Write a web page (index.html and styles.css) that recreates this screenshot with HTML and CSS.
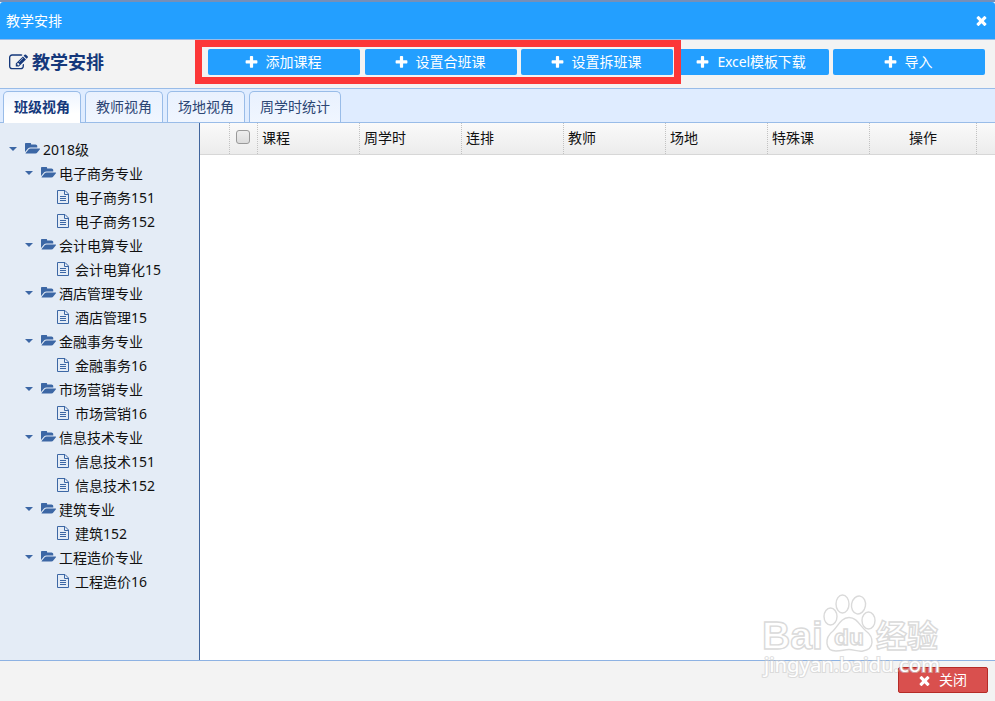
FILE: index.html
```
<!DOCTYPE html>
<html lang="zh-CN">
<head>
<meta charset="utf-8">
<title>教学安排</title>
<link rel="stylesheet" href="styles.css">
</head>
<body>
<svg class="symbols" aria-hidden="true">
  <symbol id="plus" viewBox="0 0 1792 1792"><path d="M1600 736v192q0 40-28 68t-68 28h-416v416q0 40-28 68t-68 28h-192q-40 0-68-28t-28-68v-416h-416q-40 0-68-28t-28-68v-192q0-40 28-68t68-28h416v-416q0-40 28-68t68-28h192q40 0 68 28t28 68v416h416q40 0 68 28t28 68z"/></symbol>
  <symbol id="times" viewBox="0 0 1792 1792"><path d="M1490 1322q0 40-28 68l-136 136q-28 28-68 28t-68-28l-294-294-294 294q-28 28-68 28t-68-28l-136-136q-28-28-28-68t28-68l294-294-294-294q-28-28-28-68t28-68l136-136q28-28 68-28t68 28l294 294 294-294q28-28 68-28t68 28l136 136q28 28 28 68t-28 68l-294 294 294 294q28 28 28 68z"/></symbol>
  <symbol id="edit" viewBox="0 0 1792 1792"><path d="M888 1184l116-116-152-152-116 116v56h96v96h56zm440-720q-16-16-33 1l-350 350q-17 17-1 33t33-1l350-350q17-17 1-33zm80 594v190q0 119-84.500 203.500t-203.500 84.500h-832q-119 0-203.500-84.500t-84.500-203.500v-832q0-119 84.500-203.500t203.500-84.500h832q63 0 117 25 15 7 18 23 3 17-9 29l-49 49q-14 14-32 8-23-6-45-6h-832q-66 0-113 47t-47 113v832q0 66 47 113t113 47h832q66 0 113-47t47-113v-126q0-13 9-22l64-64q15-15 35-7t20 29zm-96-738l288 288-672 672h-288v-288zm444 132l-92 92-288-288 92-92q28-28 68-28t68 28l152 152q28 28 28 68t-28 68z"/></symbol>
  <symbol id="folder" viewBox="0 256 1880 1280"><path d="M1879 952q0 31-31 66l-336 396q-43 51-120.500 86.500t-143.500 35.500h-1088q-34 0-60.500-13t-26.500-43q0-31 31-66l336-396q43-51 120.500-86.500t143.500-35.500h1088q34 0 60.500 13t26.500 43zm-343-344v160h-832q-94 0-197 47.500t-164 119.500l-337 396-5 6q0-4-.5-12.500t-.5-12.500v-960q0-92 66-158t158-66h320q92 0 158 66t66 158v32h544q92 0 158 66t66 158z"/></symbol>
  <symbol id="file" viewBox="0 0 12 14"><path d="M.5.5h7.500l3.500 3.500v9.500h-11zM7.500.5v4h4M3 6.500h6M3 8.500h6M3 10.500h6" fill="none" stroke="currentColor"/></symbol>
</svg>

<div class="dialog">
  <header class="titlebar">
    <span>教学安排</span>
    <svg class="icon"><use href="#times"/></svg>
  </header>

  <div class="toolbar">
    <h1><svg class="edit"><use href="#edit"/></svg>教学安排</h1>
    <div class="actions">
      <div class="highlight"></div>
      <button class="btn first"><svg class="icon"><use href="#plus"/></svg>添加课程</button>
      <button class="btn"><svg class="icon"><use href="#plus"/></svg>设置合班课</button>
      <button class="btn"><svg class="icon"><use href="#plus"/></svg>设置拆班课</button>
      <button class="btn wide"><svg class="icon"><use href="#plus"/></svg><span class="label">Excel模板下载</span></button>
      <button class="btn"><svg class="icon"><use href="#plus"/></svg>导入</button>
    </div>
  </div>

  <nav class="tabs">
    <a class="tab active">班级视角</a>
    <a class="tab">教师视角</a>
    <a class="tab">场地视角</a>
    <a class="tab">周学时统计</a>
  </nav>

  <main class="content">
    <aside class="tree">
      <div class="node root"><i class="arrow"></i><svg class="folder"><use href="#folder"/></svg>2018级</div>
      <div class="node major"><i class="arrow"></i><svg class="folder"><use href="#folder"/></svg>电子商务专业</div>
      <div class="node class"><svg class="file"><use href="#file"/></svg>电子商务151</div>
      <div class="node class"><svg class="file"><use href="#file"/></svg>电子商务152</div>
      <div class="node major"><i class="arrow"></i><svg class="folder"><use href="#folder"/></svg>会计电算专业</div>
      <div class="node class"><svg class="file"><use href="#file"/></svg>会计电算化15</div>
      <div class="node major"><i class="arrow"></i><svg class="folder"><use href="#folder"/></svg>酒店管理专业</div>
      <div class="node class"><svg class="file"><use href="#file"/></svg>酒店管理15</div>
      <div class="node major"><i class="arrow"></i><svg class="folder"><use href="#folder"/></svg>金融事务专业</div>
      <div class="node class"><svg class="file"><use href="#file"/></svg>金融事务16</div>
      <div class="node major"><i class="arrow"></i><svg class="folder"><use href="#folder"/></svg>市场营销专业</div>
      <div class="node class"><svg class="file"><use href="#file"/></svg>市场营销16</div>
      <div class="node major"><i class="arrow"></i><svg class="folder"><use href="#folder"/></svg>信息技术专业</div>
      <div class="node class"><svg class="file"><use href="#file"/></svg>信息技术151</div>
      <div class="node class"><svg class="file"><use href="#file"/></svg>信息技术152</div>
      <div class="node major"><i class="arrow"></i><svg class="folder"><use href="#folder"/></svg>建筑专业</div>
      <div class="node class"><svg class="file"><use href="#file"/></svg>建筑152</div>
      <div class="node major"><i class="arrow"></i><svg class="folder"><use href="#folder"/></svg>工程造价专业</div>
      <div class="node class"><svg class="file"><use href="#file"/></svg>工程造价16</div>
    </aside>
    <section class="grid">
      <div class="grid-head">
        <span></span>
        <span class="check"><i class="box"></i></span>
        <span>课程</span>
        <span>周学时</span>
        <span>连排</span>
        <span>教师</span>
        <span>场地</span>
        <span>特殊课</span>
        <span class="center">操作</span>
      </div>
    </section>
  </main>

  <footer class="footer">
    <button class="close"><svg class="icon"><use href="#times"/></svg>关闭</button>
  </footer>

  <svg class="watermark" viewBox="0 0 190 94">
    <g class="outline">
      <text x="6" y="61" class="latin" textLength="61" lengthAdjust="spacingAndGlyphs">Bai</text>
      <ellipse cx="74.500" cy="28.500" rx="6.500" ry="8.500"/>
      <ellipse cx="86.500" cy="16" rx="6.500" ry="9"/>
      <ellipse cx="102.500" cy="17" rx="7" ry="9" transform="rotate(10 102.500 17)"/>
      <ellipse cx="112.500" cy="32.500" rx="6.500" ry="8.500"/>
      <path d="M93 29.500C85 29.500 82 38 77 43C68 50 69 63 80 63C86 63 88 61.500 93 61.500S102 64 107 63C119 61 118 49 110 43C104 38 101 29.500 93 29.500Z"/>
      <text x="78" y="57" class="du" textLength="30" lengthAdjust="spacingAndGlyphs">du</text>
      <text x="120" y="59" class="cn" textLength="62" lengthAdjust="spacingAndGlyphs">经验</text>
    </g>
    <text x="8" y="84" class="url" textLength="176" lengthAdjust="spacingAndGlyphs">jingyan.baidu.com</text>
  </svg>
</div>
</body>
</html>
```
FILE: styles.css
```
* { box-sizing: border-box; }
body {
  margin: 0;
  font: 14px/20px "Noto Sans", "Noto Sans CJK SC", sans-serif;
  color: #111;
}
button { font: inherit; margin: 0; padding: 0; }
.symbols { position: absolute; width: 0; height: 0; }
.icon { width: 15px; height: 15px; fill: currentColor; flex: none; }

.dialog {
  position: relative;
  display: flex;
  flex-direction: column;
  width: 995px;
  height: 701px;
  overflow: hidden;
  border-top: 2px solid #768fb8;
  background: #fff;
}
.titlebar {
  display: flex;
  align-items: center;
  justify-content: space-between;
  height: 38px;
  flex: none;
  padding: 0 6px;
  color: #fff;
  background: #239fff;
  border-bottom: 1px solid #99bce8;
  border-radius: 3px 3px 0 0;
}

.toolbar {
  display: flex;
  justify-content: space-between;
  height: 49px;
  flex: none;
  padding: 9px 10px 0 9px;
  background: #f3f3f3;
  border-bottom: 1px solid #99bce8;
}
h1 {
  display: flex;
  align-items: center;
  gap: 4px;
  height: 26px;
  margin: 0;
  font-size: 18px;
  font-weight: 700;
  color: #15387b;
}
.edit { width: 19px; height: 19px; fill: currentColor; }
.actions { position: relative; display: flex; gap: 4px; }
.highlight {
  position: absolute;
  left: -13px;
  top: -9px;
  width: 486px;
  height: 44px;
  border: 7px solid #fc3738;
  z-index: 1;
}
.btn {
  display: flex;
  align-items: center;
  justify-content: center;
  gap: 7px;
  width: 152px;
  height: 26px;
  padding-right: 3px;
  border: 0;
  border-radius: 2px;
  color: #fff;
  background: #239fff;
}
.first { margin-right: 1px; }
.wide { padding-right: 5px; }
.label { letter-spacing: -.1px; }

.tabs {
  display: flex;
  align-items: flex-end;
  gap: 4px;
  height: 34px;
  flex: none;
  padding-left: 3px;
  background: #dfecff;
  border-bottom: 1px solid #99bce8;
}
.tab {
  height: 31px;
  padding: 5px 10px 0;
  border: 1px solid #99bce8;
  border-bottom: 0;
  border-radius: 5px 5px 0 0;
  color: #2c4674;
  background: linear-gradient(#e9f1fe, #f0f6ff);
}
.tab.active {
  height: 32px;
  margin-bottom: -1px;
  font-weight: 700;
  color: #15387b;
  background: linear-gradient(#edf4ff, #fff 70%);
}

.content { display: flex; flex: 1; min-height: 0; }
.tree {
  width: 200px;
  padding-top: 15px;
  background: #e4ecf6;
  border-right: 1px solid #40659d;
}
.node { display: flex; align-items: center; height: 24px; color: #111; }
.root { padding-left: 9px; }
.major { padding-left: 25px; }
.class { padding-left: 57px; }
.arrow {
  margin: -2px 8px 0 0;
  border: 4px solid transparent;
  border-top-color: #3c67a5;
  border-bottom: 0;
}
.folder { width: 15px; height: 11px; margin: -3px 3px 0 0; fill: #3c67a5; }
.file { width: 12px; height: 14px; margin: -2px 6px 0 0; color: #3c67a5; }

.grid { flex: 1; }
.grid-head {
  display: grid;
  grid-template-columns: 30px 28px repeat(6, 102px) 107px;
  height: 32px;
  background: linear-gradient(#fafafa, #ececec);
  border-bottom: 1px solid #d7d7d7;
}
.grid-head span {
  padding: 5px 0 0 4px;
  border-right: 1px dotted #c2c2c2;
}
.grid-head .center { padding-left: 0; text-align: center; }
.grid-head .check { padding: 7px 0 0 6px; }
.box {
  display: block;
  width: 14px;
  height: 14px;
  border: 1px solid #999;
  border-radius: 3px;
  background: linear-gradient(#eee, #dcdcdc);
}

.footer {
  display: flex;
  justify-content: flex-end;
  height: 41px;
  flex: none;
  padding: 6px 7px 0 0;
  background: #f3f3f3;
  border-top: 1px solid #8db2e3;
}
.close {
  display: flex;
  align-items: center;
  justify-content: center;
  gap: 7px;
  width: 90px;
  height: 26px;
  padding-right: 2px;
  border: 1px solid #b52b27;
  border-radius: 2px;
  color: #fff;
  background: #d9504e;
}

.watermark {
  position: absolute;
  left: 756px;
  top: 586px;
  width: 190px;
  height: 94px;
  font-family: "Liberation Sans", "Noto Sans CJK SC", sans-serif;
}
.outline { fill: #fff; stroke: #dadada; stroke-width: 1.4; }
.latin { font-size: 39px; font-weight: 700; }
.du { font-size: 22px; font-weight: 700; }
.cn { font-size: 31px; font-weight: 700; }
.url {
  font-family: "Noto Sans", sans-serif;
  font-size: 19px;
  fill: #fff;
  stroke: #ccc;
  stroke-width: 2.2;
  stroke-opacity: .6;
  paint-order: stroke;
}
```
